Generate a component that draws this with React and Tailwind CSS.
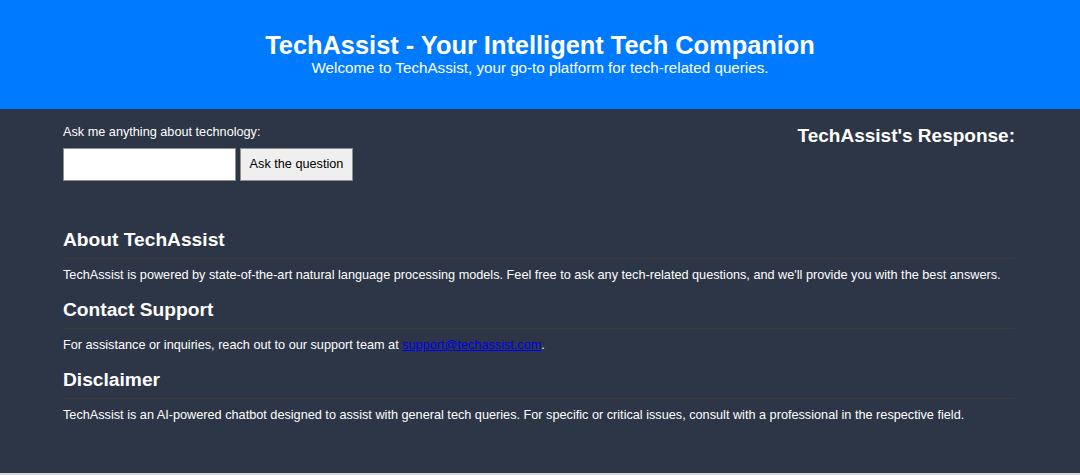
export default function App() {
    const sections = [
        {
            title: "About TechAssist",
            body: (
                <>
                    TechAssist is powered by state-of-the-art natural language
                    processing models. Feel free to ask any tech-related
                    questions, and we'll provide you with the best answers.
                </>
            ),
        },
        {
            title: "Contact Support",
            body: (
                <>
                    For assistance or inquiries, reach out to our support team
                    at{" "}
                    <a
                        href="#"
                        className="text-[#0000ee] underline"
                    >
                        support@techassist.com
                    </a>
                    .
                </>
            ),
        },
        {
            title: "Disclaimer",
            body: (
                <>
                    TechAssist is an AI-powered chatbot designed to assist with
                    general tech queries. For specific or critical issues,
                    consult with a professional in the respective field.
                </>
            ),
        },
    ];

    return (
        <div className="min-h-[475px] bg-[#cfd6df] font-['Liberation_Sans',Arial,sans-serif]">
            {/* Header */}
            <header className="h-[109px] bg-[#007bff] text-white flex flex-col items-center justify-center">
                <h1 className="text-[25.4px] leading-[28px] font-bold mt-[-2px]">
                    TechAssist - Your Intelligent Tech Companion
                </h1>
                <p className="text-[15.2px] leading-[18px]">
                    Welcome to TechAssist, your go-to platform for tech-related
                    queries.
                </p>
            </header>

            {/* Main */}
            <main className="h-[364px] bg-[#2d3646] text-white">
                <div className="mx-[63px] w-[952px] pt-[15px]">
                    <div className="flex justify-between">
                        <div>
                            <label className="block text-[12.7px] leading-[16px]">
                                Ask me anything about technology:
                            </label>
                            <div className="mt-[8px] flex gap-[4px]">
                                <input
                                    type="text"
                                    className="w-[173px] h-[33px] bg-white border border-[#8f8f8f] text-black px-2 text-[12.7px]"
                                />
                                <button className="w-[113px] h-[33px] bg-[#efefef] border border-[#8f8f8f] text-black text-[12.7px]">
                                    Ask the question
                                </button>
                            </div>
                        </div>
                        <h3 className="text-[19px] leading-[22px] font-bold mt-[1px]">
                            TechAssist's Response:
                        </h3>
                    </div>

                    <div className="mt-[47px]">
                        {sections.map((s) => (
                            <section key={s.title} className="mb-[15px]">
                                <h2 className="text-[19.2px] leading-[24px] font-bold pb-[6px] border-b border-[#3e3b3a]">
                                    {s.title}
                                </h2>
                                <p className="mt-[8px] text-[12.7px] leading-[16px]">
                                    {s.body}
                                </p>
                            </section>
                        ))}
                    </div>
                </div>
            </main>
        </div>
    );
}
